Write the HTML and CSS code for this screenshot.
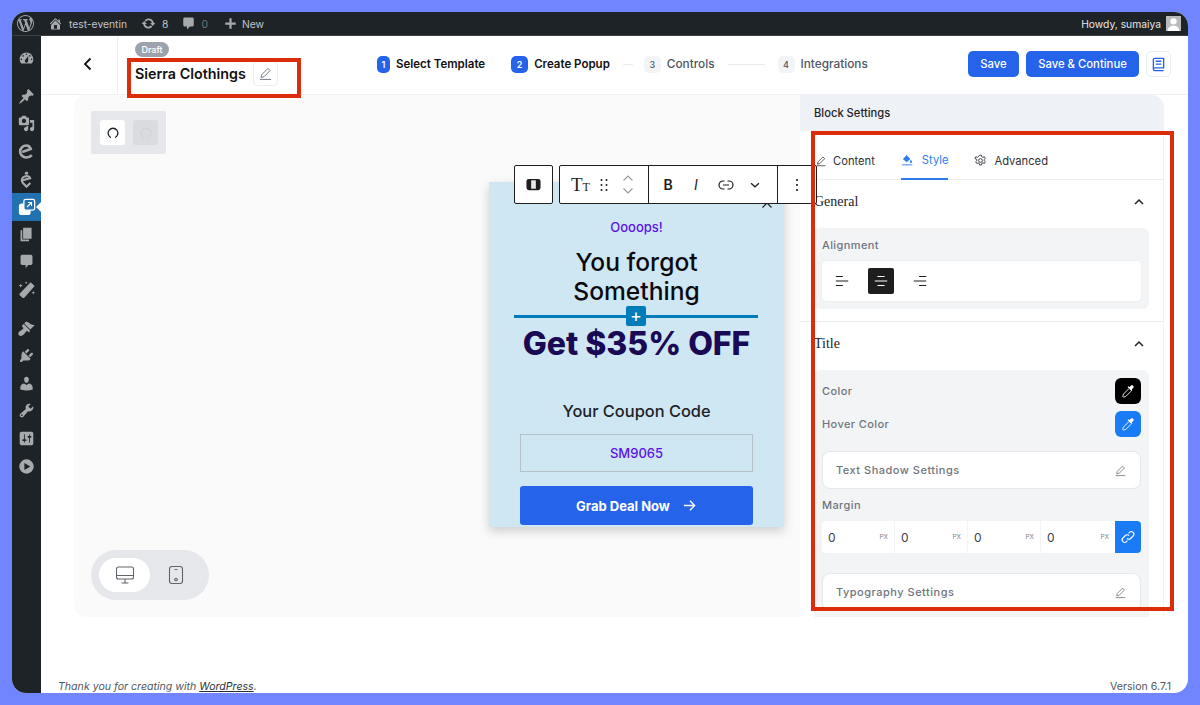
FILE: index.html
```html
<!DOCTYPE html>
<html lang="en">
<head>
    <meta charset="UTF-8">
    <title>Create Popup</title>
    <link rel="stylesheet" href="styles.css">
</head>
<body>

<svg class="sprite" width="0" height="0">
    <symbol id="pen" viewBox="0 0 16 16"><path d="M10.600 2.600l2.300 2.300-6.600 6.600-3 .7.7-3zM2 14.300h12" fill="none" stroke="currentColor" stroke-width="1"/></symbol>
    <symbol id="dropper" viewBox="0 0 16 16"><path d="M9.800 3.500l1.500-1.500c.7-.7 1.900-.7 2.600 0s.7 1.900 0 2.600l-1.500 1.500.5.9-1 1-4.400-4.400 1-1z" fill="currentColor"/><path d="M8.800 5.500l-6 6-.8 2.800.7.7 2.800-.8 6-6" fill="none" stroke="currentColor" stroke-width="1"/></symbol>
    <symbol id="chev-up" viewBox="0 0 12 12"><path d="M2 8l4-4 4 4" fill="none" stroke="currentColor" stroke-width="1.500"/></symbol>
</svg>

<div class="window">
    <div class="adminbar">
        <svg class="wp-logo" viewBox="0 0 20 20"><path fill="currentColor" d="M20 10c0-5.510-4.490-10-10-10C4.480 0 0 4.490 0 10c0 5.520 4.480 10 10 10 5.510 0 10-4.480 10-10zM7.780 15.370L4.370 6.220c.55-.02 1.170-.08 1.170-.08.5-.06.44-1.130-.06-1.110 0 0-1.450.11-2.370.11-.18 0-.37 0-.58-.01C4.120 2.690 6.870 1.110 10 1.110c2.330 0 4.450.87 6.050 2.340-.68-.11-1.650.39-1.650 1.580 0 .74.45 1.360.9 2.100.35.61.55 1.360.55 2.460 0 1.490-1.400 5-1.400 5l-3.030-8.370c.54-.02.82-.17.82-.17.5-.05.44-1.250-.06-1.220 0 0-1.440.12-2.380.12-.87 0-2.330-.12-2.330-.12-.5-.03-.56 1.200-.06 1.220l.92.08 1.260 3.410zM17.410 10c.24-.64.74-1.870.43-4.250.7 1.290 1.050 2.710 1.050 4.250 0 3.290-1.730 6.240-4.400 7.780.97-2.590 1.940-5.200 2.920-7.780zM6.100 18.090C3.120 16.650 1.110 13.530 1.110 10c0-1.300.23-2.480.72-3.590C3.250 10.300 4.670 14.200 6.100 18.090zm4.030-6.630l2.580 6.980c-.86.29-1.760.45-2.710.45-.79 0-1.570-.11-2.290-.33.81-2.380 1.620-4.740 2.420-7.100z"/></svg>
        <span class="bar-item site">
            <svg viewBox="0 0 20 20"><path fill="currentColor" d="M16 8.500l1.530 1.530-1.060 1.060L10 4.620l-6.470 6.470-1.060-1.060L10 2.500l4 4v-2h2v4zm-6-2.460l6 5.990V18H4v-5.970zM12 17v-5H8v5h4z"/></svg>
            test-eventin
        </span>
        <span class="bar-item updates">
            <svg viewBox="0 0 20 20"><path fill="currentColor" d="M10.200 3.280c3.530 0 6.430 2.610 6.920 6h2.080l-3.500 4-3.500-4h2.320c-.45-1.970-2.210-3.450-4.320-3.450-1.450 0-2.730.71-3.540 1.780L4.950 5.660C6.230 4.200 8.110 3.280 10.200 3.280zm-.4 13.440c-3.520 0-6.430-2.610-6.920-6H.8l3.500-4c1.170 1.330 2.330 2.670 3.500 4H5.480c.45 1.970 2.210 3.450 4.320 3.450 1.450 0 2.730-.71 3.540-1.780l1.710 1.950c-1.280 1.460-3.150 2.380-5.250 2.380z"/></svg>
            8
        </span>
        <span class="bar-item comments">
            <svg viewBox="0 0 20 20"><path fill="currentColor" d="M5 2h10c1.100 0 2 .9 2 2v8c0 1.100-.9 2-2 2h-3l-4 4v-4H5c-1.100 0-2-.9-2-2V4c0-1.100.9-2 2-2z"/></svg>
            <em>0</em>
        </span>
        <span class="bar-item new">
            <svg viewBox="0 0 20 20"><path fill="currentColor" d="M17 8.500v3h-5.500V17h-3v-5.500H3v-3h5.500V3h3v5.500z"/></svg>
            New
        </span>
        <span class="howdy">Howdy, sumaiya</span>
        <span class="avatar">
            <svg viewBox="0 0 14 14"><circle cx="7" cy="5" r="3" fill="#fff"/><path d="M1.500 14c0-3.500 2.500-5 5.500-5s5.500 1.500 5.500 5z" fill="#fff"/></svg>
        </span>
    </div>

    <div class="body">
        <nav class="sidebar">
            <a class="nav-item"><svg viewBox="0 0 20 20"><path fill-rule="evenodd" d="M3.760 16h12.480c1.100-1.370 1.760-3.110 1.760-5 0-4.420-3.580-8-8-8s-8 3.580-8 8c0 1.890.66 3.630 1.760 5zM10 4c.55 0 1 .45 1 1s-.45 1-1 1-1-.45-1-1 .45-1 1-1zM6 6c.55 0 1 .45 1 1s-.45 1-1 1-1-.45-1-1 .45-1 1-1zm8 0c.55 0 1 .45 1 1s-.45 1-1 1-1-.45-1-1 .45-1 1-1zm-5.370 5.550L12 7v6c0 1.100-.9 2-2 2s-2-.9-2-2c0-.57.24-1.080.63-1.450zM4 10c.55 0 1 .45 1 1s-.45 1-1 1-1-.45-1-1 .45-1 1-1zm12 0c.55 0 1 .45 1 1s-.45 1-1 1-1-.45-1-1 .45-1 1-1z"/></svg></a>
            <div class="nav-sep"></div>
            <a class="nav-item"><svg viewBox="0 0 20 20"><path d="M10.440 3.020l1.820-1.820 6.360 6.350-1.830 1.820c-1.050-.68-2.480-.57-3.410.36l-.75.75c-.92.93-1.040 2.350-.35 3.410l-1.830 1.820-2.410-2.410-2.800 2.790c-.42.42-3.380 2.710-3.800 2.290s1.860-3.390 2.280-3.810l2.790-2.790L4.100 9.360l1.830-1.820c1.050.69 2.480.57 3.400-.36l.75-.75c.93-.92 1.050-2.350.36-3.410z"/></svg></a>
            <a class="nav-item"><svg viewBox="0 0 20 20"><path d="M13 11V4c0-.55-.45-1-1-1h-1.670L9 1H5L3.670 3H2c-.55 0-1 .45-1 1v7c0 .55.45 1 1 1h10c.55 0 1-.45 1-1zM7 4.500c1.380 0 2.500 1.120 2.500 2.500S8.380 9.500 7 9.500 4.500 8.380 4.500 7 5.620 4.500 7 4.500zM14 6h5v10.500c0 1.380-1.120 2.500-2.500 2.500S14 17.880 14 16.500s1.120-2.500 2.500-2.500c.17 0 .34.02.5.05V9h-3V6zm-4 8.050V13h2v3.500c0 1.380-1.120 2.500-2.500 2.500S7 17.880 7 16.500 8.120 14 9.500 14c.17 0 .34.02.5.05z"/></svg></a>
            <a class="nav-item"><svg viewBox="0 0 20 20"><path fill="none" stroke="currentColor" stroke-width="3" d="M5 10.500l10-3.500c-.8-2.300-2.800-4-5.200-4C6 3 2.500 6 2.500 10c0 4 3.300 7 7.300 7 2.600 0 4.900-1 6.500-2.800"/></svg></a>
            <a class="nav-item"><svg viewBox="0 0 20 20"><circle cx="10" cy="2.500" r="2"/><path fill="none" stroke="currentColor" stroke-width="2.500" d="M5.500 11l8.800-2.500C13.800 7 12 6 10 6 7 6 4.500 8.200 4.500 11c0 1.300.5 2.300 1.300 3.200L10 18.500l4.500-4.500"/></svg></a>
            <a class="nav-item active">
                <svg viewBox="0 0 20 20"><rect x="1" y="6" width="13" height="13" rx="3" fill="#fff"/><rect x="6.500" y="1.500" width="12" height="12" rx="2" fill="#2271b1" stroke="#fff" stroke-width="1.500"/><path d="M10 10l5-5M11 5h4v4" fill="none" stroke="#fff" stroke-width="1.200"/></svg>
            </a>
            <a class="nav-item"><svg viewBox="0 0 20 20"><path d="M6 15V2h10v13H6zm-1 1h8v2H3V5h2v11z"/></svg></a>
            <a class="nav-item"><svg viewBox="0 0 20 20"><path d="M5 2h10c1.100 0 2 .9 2 2v8c0 1.100-.9 2-2 2h-3l-3 4v-4H5c-1.100 0-2-.9-2-2V4c0-1.100.9-2 2-2z"/></svg></a>
            <a class="nav-item"><svg class="wand" viewBox="0 0 20 20"><path d="M14 1.500l4.500 4L7 18.500c-.6.6-1.500.6-2 .1l-3-2.700c-.6-.5-.6-1.400 0-2zM3 3l.7 1.500L5.200 5l-1.500.7L3 7.200l-.7-1.500L.8 5l1.500-.5zM9 .5l.5 1 1 .5-1 .5-.5 1-.5-1-1-.5 1-.5zM17 11l.6 1.400 1.400.6-1.400.6L17 15l-.6-1.400-1.400-.6 1.400-.6z"/></svg></a>
            <div class="nav-sep wide"></div>
            <a class="nav-item"><svg viewBox="0 0 20 20"><path d="M14.480 11.060L7.410 3.990l1.500-1.500c.5-.56 2.300-.47 3.510.32 1.210.8 1.430 1.280 2.910 2.100 1.180.64 2.450 1.260 4.450.85zm-.71.71L6.700 4.700 4.930 6.470c-.39.39-.39 1.020 0 1.410l1.060 1.060c.39.39.39 1.030 0 1.420-.6.6-1.430 1.110-2.210 1.690-.35.26-.7.53-1.010.84C1.430 13.230.4 14.910.4 16.270c0 .52.07 1 .8 1.700.71.71 1.260.8 1.730.8 1.360 0 3.040-1.030 4.380-2.370.31-.31.58-.66.84-1.010.58-.78 1.090-1.610 1.690-2.210.39-.39 1.030-.39 1.420 0l1.060 1.060c.39.39 1.020.39 1.410 0z"/></svg></a>
            <a class="nav-item"><svg viewBox="0 0 20 20"><path d="M13.110 4.360L9.870 7.600 8 5.730l3.240-3.240c.35-.34 1.050-.2 1.560.32.52.51.66 1.210.31 1.550zm-8 1.770l.91-1.120 9.010 9.010-1.190.84c-.71.71-2.630 1.160-3.820 1.160H6.140L4.900 17.260c-.59.59-1.540.59-2.120 0-.59-.58-.59-1.530 0-2.120l1.240-1.240v-3.880c0-1.130.4-3.190 1.090-3.890zm7.260 3.970l3.240-3.240c.34-.35 1.040-.21 1.550.31.52.51.66 1.210.31 1.550l-3.240 3.250z"/></svg></a>
            <a class="nav-item"><svg viewBox="0 0 20 20"><path d="M10 9.250c-2.270 0-2.730-3.440-2.730-3.440C7 4.020 7.820 2 9.970 2c2.160 0 2.980 2.020 2.710 3.810 0 0-.41 3.440-2.680 3.440zm0 2.570L12.720 10c2.390 0 4.520 2.330 4.520 4.530v2.490s-3.650 1.130-7.240 1.130c-3.650 0-7.240-1.130-7.240-1.130v-2.490c0-2.250 1.940-4.480 4.470-4.480z"/></svg></a>
            <a class="nav-item"><svg viewBox="0 0 20 20"><path d="M16.680 9.770c-1.340 1.340-3.300 1.670-4.950.99l-5.410 6.520c-.99.99-2.590.99-3.580 0s-.99-2.590 0-3.570l6.520-5.420c-.68-1.650-.35-3.610.99-4.950 1.280-1.280 3.120-1.620 4.720-1.060l-2.890 2.890 2.820 2.820 2.860-2.870c.53 1.580.18 3.390-1.080 4.650zM3.810 16.210c.4.39 1.040.39 1.430 0 .4-.4.4-1.040 0-1.430-.39-.4-1.030-.4-1.430 0-.39.39-.39 1.030 0 1.430z"/></svg></a>
            <a class="nav-item"><svg viewBox="0 0 20 20"><path d="M18 16V4c0-1.100-.9-2-2-2H4c-1.100 0-2 .9-2 2v12c0 1.100.9 2 2 2h12c1.100 0 2-.9 2-2zM8 11h1c.55 0 1 .45 1 1s-.45 1-1 1H8v1.500c0 .28-.22.5-.5.5s-.5-.22-.5-.5V13H6c-.55 0-1-.45-1-1s.45-1 1-1h1V5.500c0-.28.22-.5.5-.5s.5.22.5.5V11zm5-2h-1c-.55 0-1-.45-1-1s.45-1 1-1h1V5.500c0-.28.22-.5.5-.5s.5.22.5.5V7h1c.55 0 1 .45 1 1s-.45 1-1 1h-1v5.500c0 .28-.22.5-.5.5s-.5-.22-.5-.5V9z"/></svg></a>
            <a class="nav-item"><svg viewBox="0 0 20 20"><path fill-rule="evenodd" d="M10 1.500a8.500 8.500 0 1 1 0 17 8.500 8.500 0 0 1 0-17zM7.500 6v8l7-4z"/></svg></a>
        </nav>

        <div class="main">
            <header class="header">
                <div class="back">
                    <svg viewBox="0 0 16 16"><path d="M10.500 2.500L5 8l5.500 5.500" fill="none" stroke="#111" stroke-width="1.800"/></svg>
                </div>
                <div class="title-block">
                    <span class="badge">Draft</span>
                    <div class="title-row">
                        <h1 class="page-title">Sierra Clothings</h1>
                        <span class="icon-btn"><svg><use href="#pen"/></svg></span>
                    </div>
                </div>
                <div class="steps">
                    <div class="step done first"><span class="num">1</span>Select Template</div>
                    <div class="step done"><span class="num">2</span>Create Popup</div>
                    <span class="step-line short"></span>
                    <div class="step"><span class="num">3</span>Controls</div>
                    <span class="step-line"></span>
                    <div class="step"><span class="num">4</span>Integrations</div>
                </div>
                <div class="actions">
                    <button class="btn save">Save</button>
                    <button class="btn save-next">Save &amp; Continue</button>
                    <span class="doc-btn">
                        <svg viewBox="0 0 16 16"><path d="M2.500 12.500V3c0-.9.6-1.500 1.500-1.500h9.500v10H4c-.9 0-1.500.6-1.500 1.500s.6 1.500 1.500 1.500h9.500" fill="none" stroke="#2563eb" stroke-width="1.400"/><path d="M5 4.500h6M5 7.500h6" stroke="#2563eb" stroke-width="1.400"/></svg>
                    </span>
                </div>
            </header>

            <div class="workspace">
                <div class="canvas">
                    <div class="preview-tools">
                        <span class="tool on"><svg viewBox="0 0 16 16"><path d="M5.500 13.200A5.600 5.600 0 1 1 10.500 13.200" fill="none" stroke="#1d2327" stroke-width="1.500"/></svg></span>
                        <span class="tool off"><svg viewBox="0 0 16 16"><path d="M5.500 13.200A5.600 5.600 0 1 1 10.500 13.200" fill="none" stroke="#d0d3d7" stroke-width="1.500"/></svg></span>
                    </div>

                    <div class="devices">
                        <span class="device on">
                            <svg viewBox="0 0 20 20"><rect x="1.500" y="2" width="17" height="12" rx="2" fill="none" stroke="currentColor" stroke-width="1.100"/><path d="M1.500 10.500h17M10 14v4M6.500 18h7" fill="none" stroke="currentColor" stroke-width="1.100"/></svg>
                        </span>
                        <span class="device">
                            <svg viewBox="0 0 20 20"><rect x="3.500" y="1.500" width="13" height="17" rx="2.500" fill="none" stroke="currentColor" stroke-width="1.100"/><path d="M8.500 4.500h3" stroke="currentColor" stroke-width="1.100"/><circle cx="10" cy="14.500" r="1.300" fill="none" stroke="currentColor" stroke-width="1.100"/></svg>
                        </span>
                    </div>

                    <div class="popup">
                        <svg class="popup-close" viewBox="0 0 12 12"><path d="M1.500 1.500l9 9M10.500 1.500l-9 9" stroke="#222" stroke-width="1.200"/></svg>
                        <p class="oops">Oooops!</p>
                        <h2 class="forgot">You forgot Something</h2>
                        <div class="inserter"><span class="plus">+</span></div>
                        <h2 class="deal">Get $35% OFF</h2>
                        <p class="coupon-label">Your Coupon Code</p>
                        <div class="coupon">SM9065</div>
                        <div class="grab">
                            Grab Deal Now
                            <svg viewBox="0 0 16 16"><path d="M2 8h11.500M8.500 3l5 5-5 5" fill="none" stroke="#fff" stroke-width="1.400"/></svg>
                        </div>
                    </div>

                    <div class="block-toolbar">
                        <div class="tb-group tb-single">
                            <svg viewBox="0 0 16 16"><rect x=".5" y="2" width="15" height="12" rx="2.500" fill="#1e1e1e"/><rect x="5.500" y="3.500" width="5" height="9" fill="#e8e8e8"/></svg>
                        </div>
                        <div class="tb-group tb-main">
                            <div class="tb-seg seg-a">
                                <span class="tt">T<small>T</small></span>
                                <svg class="grip" viewBox="0 0 10 14"><g fill="#1e1e1e"><circle cx="2.500" cy="2" r="1"/><circle cx="7.500" cy="2" r="1"/><circle cx="2.500" cy="7" r="1"/><circle cx="7.500" cy="7" r="1"/><circle cx="2.500" cy="12" r="1"/><circle cx="7.500" cy="12" r="1"/></g></svg>
                                <span class="movers">
                                    <svg viewBox="0 0 12 8"><path d="M1.500 6.500L6 2l4.500 4.500" fill="none" stroke="#999" stroke-width="1.100"/></svg>
                                    <svg viewBox="0 0 12 8"><path d="M1.500 1.500L6 6l4.500-4.500" fill="none" stroke="#999" stroke-width="1.100"/></svg>
                                </span>
                            </div>
                            <div class="tb-seg seg-b">
                                <b>B</b>
                                <i>I</i>
                                <svg viewBox="0 0 16 16"><path d="M6.500 4H5a4 4 0 0 0 0 8h1.500M9.500 4H11a4 4 0 0 1 0 8H9.500M5 8h6" fill="none" stroke="#1e1e1e" stroke-width="1.200"/></svg>
                                <svg viewBox="0 0 16 16"><path d="M3.500 6L8 10l4.500-4" fill="none" stroke="#1e1e1e" stroke-width="1.500"/></svg>
                            </div>
                            <div class="tb-seg seg-c">
                                <svg viewBox="0 0 4 16"><g fill="#1e1e1e"><circle cx="2" cy="3" r="1.100"/><circle cx="2" cy="8" r="1.100"/><circle cx="2" cy="13" r="1.100"/></g></svg>
                            </div>
                        </div>
                    </div>
                </div>

                <aside class="panel">
                    <div class="panel-head">Block Settings</div>
                    <div class="tabs">
                        <span class="tab tab-content"><svg><use href="#pen"/></svg>Content</span>
                        <span class="tab current">
                            <svg viewBox="0 0 16 16"><path d="M7 1l5.500 5.500-5 4.500-5-4.500 4-4" fill="currentColor"/><path d="M13.200 8.500c.6 1 1 1.500 1 2.200a1 1 0 0 1-2 0c0-.7.4-1.200 1-2.200zM1 14.500h14" fill="currentColor" stroke="currentColor" stroke-width="1.200"/></svg>
                            Style
                        </span>
                        <span class="tab tab-advanced">
                            <svg viewBox="0 0 16 16"><circle cx="8" cy="8" r="2.300" fill="none" stroke="currentColor" stroke-width="1.100"/><path d="M6.800 1.500h2.400l.4 1.900 1.300.7 1.800-.7 1.200 2.100-1.400 1.300v1.400l1.400 1.300-1.200 2.100-1.800-.7-1.300.7-.4 1.900H6.800l-.4-1.900-1.300-.7-1.800.7-1.200-2.100 1.400-1.300V6.800L1.100 5.500l1.200-2.100 1.800.7 1.300-.7z" fill="none" stroke="currentColor" stroke-width="1.100"/></svg>
                            Advanced
                        </span>
                    </div>

                    <section class="section ruled">
                        <div class="section-head">General <svg><use href="#chev-up"/></svg></div>
                        <div class="group">
                            <label class="field-label first">Alignment</label>
                            <div class="align-card">
                                <span class="align"><svg viewBox="0 0 18 18"><path d="M2 4h8M2 9h14M2 14h8" stroke="currentColor" stroke-width="1.200"/></svg></span>
                                <span class="align on"><svg viewBox="0 0 18 18"><path d="M5 4h8M2 9h14M5 14h8" stroke="currentColor" stroke-width="1.200"/></svg></span>
                                <span class="align"><svg viewBox="0 0 18 18"><path d="M8 4h8M2 9h14M8 14h8" stroke="currentColor" stroke-width="1.200"/></svg></span>
                            </div>
                        </div>
                    </section>

                    <section class="section">
                        <div class="section-head">Title <svg><use href="#chev-up"/></svg></div>
                        <div class="group tall">
                            <div class="color-row">
                                <label class="field-label">Color</label>
                                <span class="swatch black"><svg><use href="#dropper"/></svg></span>
                            </div>
                            <div class="color-row">
                                <label class="field-label">Hover Color</label>
                                <span class="swatch blue"><svg><use href="#dropper"/></svg></span>
                            </div>
                            <div class="setting-card shadow-card">Text Shadow Settings <svg><use href="#pen"/></svg></div>
                            <label class="field-label margin-label">Margin</label>
                            <div class="margins">
                                <span class="margin-box">0<small>PX</small></span>
                                <span class="margin-box">0<small>PX</small></span>
                                <span class="margin-box">0<small>PX</small></span>
                                <span class="margin-box">0<small>PX</small></span>
                                <span class="link-btn">
                                    <svg viewBox="0 0 16 16"><path d="M7 9.500a2.500 2.500 0 0 0 3.600 0l2.500-2.500A2.500 2.500 0 0 0 9.500 3.400L8.600 4.300M9 6.500a2.500 2.500 0 0 0-3.600 0L2.900 9a2.500 2.500 0 0 0 3.600 3.600l.9-.9" fill="none" stroke="#fff" stroke-width="1.100"/></svg>
                                </span>
                            </div>
                            <div class="setting-card typo-card">Typography Settings <svg><use href="#pen"/></svg></div>
                        </div>
                    </section>
                </aside>
            </div>

            <footer class="footer">
                <span class="thanks">Thank you for creating with <a>WordPress</a>.</span>
                <span class="version">Version 6.7.1</span>
            </footer>
        </div>
    </div>

    <div class="callout callout-title"></div>
    <div class="callout callout-panel"></div>
</div>

</body>
</html>
```

FILE: styles.css
```css
* {
    box-sizing: border-box;
}
html, body {
    height: 100%;
    margin: 0;
    padding: 0;
    overflow: hidden;
    background-color: #7085ff;
    font-family: Inter, "Liberation Sans", sans-serif;
}
h1, h2, p {
    margin: 0;
}
.sprite {
    position: absolute;
}
.window {
    position: relative;
    display: flex;
    flex-direction: column;
    width: 1176px;
    height: 681px;
    margin: 12px;
    border-radius: 14px;
    overflow: hidden;
    background-color: #fff;
}

/* admin bar */
.adminbar {
    display: flex;
    align-items: center;
    flex: none;
    height: 24px;
    padding: 0 7px 0 5px;
    background-color: #1d2327;
    border-bottom: 1px solid #3a3f44;
    color: #c3c4c7;
    font-size: 10.300px;
}
.wp-logo {
    width: 17px;
    height: 17px;
    margin-right: 14px;
    color: #9ca2a7;
}
.bar-item {
    display: flex;
    align-items: center;
    gap: 6px;
}
.bar-item svg {
    width: 15px;
    height: 15px;
    color: #a7aaad;
}
.site {
    margin-right: 14px;
}
.updates {
    margin-right: 13px;
}
.comments {
    margin-right: 15px;
}
.comments em {
    font-style: normal;
    color: #70757a;
    margin-left: -1px;
}
.new {
    gap: 4px;
}
.howdy {
    margin-left: auto;
    color: #e6e7e8;
}
.avatar {
    display: block;
    width: 15px;
    height: 15px;
    margin-left: 5px;
    background-color: #b8babc;
}
.avatar svg {
    display: block;
    width: 15px;
    height: 15px;
}

.body {
    display: flex;
    flex: 1;
    min-height: 0;
}

/* left menu */
.sidebar {
    flex: none;
    width: 29px;
    padding-top: 9px;
    background-color: #1d2327;
}
.nav-item {
    display: flex;
    align-items: center;
    justify-content: center;
    height: 27.600px;
    color: #a7aaad;
}
.nav-item svg {
    width: 17px;
    height: 17px;
    fill: currentColor;
}
.nav-item .wand {
    width: 18px;
    height: 18px;
}
.nav-item.active {
    position: relative;
    background-color: #2271b1;
}
.nav-item.active svg {
    width: 18px;
    height: 18px;
}
.nav-item.active::after {
    content: "";
    position: absolute;
    right: 0;
    top: 9px;
    border: 5px solid transparent;
    border-right-color: #fff;
    border-left-width: 0;
}
.nav-sep {
    height: 10px;
}
.nav-sep.wide {
    height: 11px;
}

.main {
    display: flex;
    flex-direction: column;
    flex: 1;
    min-width: 0;
}

/* top header with the steps */
.header {
    display: flex;
    align-items: center;
    flex: none;
    height: 59px;
    padding-right: 17px;
    border-bottom: 1px solid #eef0f3;
}
.back {
    display: flex;
    align-items: center;
    justify-content: center;
    flex: none;
    align-self: stretch;
    width: 77px;
    padding-left: 17px;
    padding-bottom: 2px;
    border-right: 1px solid #eceef1;
}
.back svg {
    width: 16px;
    height: 16px;
}
.title-block {
    flex: none;
    width: 259px;
    padding-left: 17px;
    padding-bottom: 3px;
}
.badge {
    display: block;
    width: 34px;
    height: 15px;
    border-radius: 8px;
    background-color: #9ca3af;
    color: #fff;
    font-size: 9px;
    font-weight: 500;
    line-height: 15px;
    text-align: center;
}
.title-row {
    display: flex;
    align-items: center;
    gap: 7px;
    margin-top: 4px;
}
.page-title {
    color: #111;
    font-size: 14.300px;
    font-weight: 600;
    line-height: 25px;
}
.icon-btn {
    display: flex;
    align-items: center;
    justify-content: center;
    width: 25px;
    height: 25px;
    border: 1px solid #eceef1;
    border-radius: 4px;
    color: #6b7280;
}
.icon-btn svg {
    width: 15px;
    height: 15px;
}
.steps {
    display: flex;
    align-items: center;
    padding-bottom: 2px;
    font-size: 11.500px;
    font-weight: 500;
    color: #50565f;
}
.step {
    display: flex;
    align-items: center;
    gap: 6px;
    white-space: nowrap;
    font-size: 11.800px;
}
.step.done {
    color: #111;
    font-weight: 600;
    font-size: 11.500px;
    margin-right: 13px;
}
.step.first {
    margin-right: 26px;
}
.num {
    display: flex;
    align-items: center;
    justify-content: center;
    width: 17px;
    height: 17px;
    border-radius: 5px;
    background-color: #f3f4f6;
    color: #50565f;
    font-size: 9px;
}
.done .num {
    background-color: #2563eb;
    color: #fff;
}
.first .num {
    width: 13px;
}
.step-line {
    width: 37px;
    height: 1px;
    margin: 0 13px;
    background-color: #e9ebee;
}
.step-line.short {
    width: 10px;
    margin-left: 0;
    margin-right: 11px;
}
.actions {
    display: flex;
    align-items: center;
    gap: 7px;
    margin-left: auto;
    padding-bottom: 2px;
}
.btn {
    height: 26px;
    padding: 0;
    border: 0;
    border-radius: 5px;
    background-color: #2563eb;
    color: #fff;
    font-family: inherit;
    font-size: 11.300px;
    font-weight: 500;
}
.save {
    width: 51px;
}
.save-next {
    width: 113px;
}
.doc-btn {
    display: flex;
    align-items: center;
    justify-content: center;
    width: 25px;
    height: 26px;
    border: 1px solid #eceef1;
    border-radius: 5px;
}
.doc-btn svg {
    width: 15px;
    height: 15px;
}

/* canvas and settings */
.workspace {
    display: flex;
    flex: none;
    height: 522px;
    margin-left: 33px;
}
.canvas {
    position: relative;
    display: flex;
    flex-direction: column;
    justify-content: space-between;
    align-items: flex-start;
    flex: none;
    width: 726px;
    padding: 16px 17px 17px;
    border-radius: 12px 0 0 12px;
    background-color: #fafafa;
}
.preview-tools {
    display: flex;
    align-items: center;
    gap: 8px;
    width: 75px;
    height: 43px;
    padding-left: 9px;
    background-color: #e5e7eb;
    border-radius: 2px;
}
.tool {
    display: flex;
    align-items: center;
    justify-content: center;
    width: 25px;
    height: 25px;
    border-radius: 3px;
}
.tool svg {
    width: 14px;
    height: 14px;
}
.tool.on {
    background-color: #fff;
}
.tool.off {
    background-color: #d9dbdf;
}
.devices {
    display: flex;
    align-items: center;
    width: 118px;
    height: 50px;
    padding-left: 8px;
    border-radius: 25px;
    background-color: #e5e7eb;
    color: #60656c;
}
.device {
    display: flex;
    align-items: center;
    justify-content: center;
    width: 51px;
    height: 34px;
    border-radius: 17px;
}
.device.on {
    background-color: #fff;
}
.device svg {
    width: 20px;
    height: 20px;
}

/* popup being edited */
.popup {
    position: absolute;
    left: 415px;
    top: 87px;
    display: flex;
    flex-direction: column;
    align-items: center;
    width: 295px;
    height: 345px;
    padding-top: 36px;
    background-color: #cfe6f3;
    box-shadow: 0 4px 10px rgba(0, 0, 0, 0.18);
}
.popup-close {
    position: absolute;
    top: 15px;
    right: 11px;
    width: 12px;
    height: 12px;
}
.oops {
    color: #5a12e8;
    font-size: 13px;
    font-weight: 500;
    line-height: 18px;
}
.forgot {
    width: 200px;
    margin-top: 12px;
    color: #0b0b0f;
    font-size: 24.600px;
    font-weight: 500;
    line-height: 29px;
    text-align: center;
}
.inserter {
    display: flex;
    align-items: center;
    justify-content: center;
    flex: none;
    width: 244px;
    height: 20px;
    margin-left: -1px;
    margin-bottom: -2px;
    background: linear-gradient(#007cba, #007cba) center / 100% 3px no-repeat;
}
.plus {
    display: block;
    width: 20px;
    height: 20px;
    border-radius: 2px;
    background-color: #007cba;
    color: #fff;
    font-size: 18px;
    font-weight: 400;
    line-height: 19px;
    text-align: center;
}
.deal {
    color: #1a0a55;
    font-size: 32px;
    font-weight: 800;
    line-height: 40px;
    white-space: nowrap;
}
.coupon-label {
    margin-top: 35px;
    color: #1d2327;
    font-size: 16.400px;
    font-weight: 500;
    line-height: 24px;
}
.coupon {
    width: 233px;
    height: 38px;
    margin-top: 11px;
    border: 1px solid #b4c3ca;
    color: #5a12e8;
    font-size: 13px;
    font-weight: 500;
    line-height: 36px;
    text-align: center;
}
.grab {
    display: flex;
    align-items: center;
    justify-content: center;
    gap: 12px;
    width: 233px;
    height: 39px;
    margin-top: 14px;
    border-radius: 3px;
    background-color: #2563eb;
    color: #fff;
    font-size: 13px;
    font-weight: 700;
}
.grab svg {
    width: 15px;
    height: 15px;
}

/* block toolbar floats over popup and panel */
.block-toolbar {
    position: absolute;
    left: 440px;
    top: 70px;
    z-index: 3;
    display: flex;
    gap: 6px;
    height: 39px;
}
.tb-group {
    display: flex;
    height: 39px;
    background-color: #fff;
    border: 1px solid #1e1e1e;
    border-radius: 2px;
}
.tb-single {
    align-items: center;
    justify-content: center;
    width: 39px;
}
.tb-single svg {
    width: 15px;
    height: 15px;
}
.tb-main {
    width: 258px;
}
.tb-seg {
    display: flex;
    align-items: center;
    height: 100%;
    color: #1e1e1e;
}
.seg-a {
    width: 89px;
    padding-left: 11px;
    border-right: 1px solid #1e1e1e;
}
.tt {
    width: 18px;
    font-family: "Liberation Serif", serif;
    font-size: 19px;
    line-height: 1;
}
.tt small {
    font-size: 12px;
}
.grip {
    width: 10px;
    height: 14px;
    margin-left: 10px;
}
.movers {
    display: flex;
    flex-direction: column;
    gap: 5px;
    margin-left: 13px;
}
.movers svg {
    display: block;
    width: 12px;
    height: 8px;
}
.seg-b {
    gap: 18px;
    width: 129px;
    padding-left: 13px;
    border-right: 1px solid #1e1e1e;
}
.seg-b b {
    width: 12px;
    font-size: 14px;
    font-weight: 600;
    text-align: center;
}
.seg-b i {
    width: 8px;
    font-size: 14px;
    text-align: center;
}
.seg-b svg {
    width: 16px;
    height: 16px;
}
.seg-b svg:last-child {
    width: 14px;
    height: 14px;
    margin-left: -4px;
}
.seg-c {
    justify-content: flex-start;
    padding-left: 17px;
}
.seg-c svg {
    width: 4px;
    height: 16px;
}

/* settings panel */
.panel {
    flex: none;
    width: 364px;
    height: 522px;
    overflow: hidden;
    border-right: 1px solid #f1f2f4;
    border-radius: 0 12px 0 0;
    background-color: #fff;
}
.panel-head {
    height: 36px;
    padding-left: 14px;
    background-color: #eef1f6;
    color: #1d2327;
    font-size: 11.200px;
    font-weight: 500;
    line-height: 36px;
}
.tabs {
    display: flex;
    gap: 26px;
    height: 49px;
    padding-left: 15px;
    border-bottom: 1px solid #edeff2;
}
.tab {
    display: flex;
    align-items: center;
    gap: 9px;
    height: 49px;
    padding-top: 10px;
    color: #2c3138;
    font-size: 11.200px;
}
.tab svg {
    width: 12px;
    height: 12px;
}
.tab-content {
    gap: 6px;
}
.tab-advanced {
    gap: 7px;
}
.tab-advanced svg {
    width: 13px;
    height: 13px;
}
.tab.current {
    border-bottom: 2px solid #2b7de9;
    color: #2b7de9;
}
.section.ruled {
    padding-bottom: 12px;
    border-bottom: 1px solid #e9ebee;
}
.section-head {
    display: flex;
    align-items: center;
    justify-content: space-between;
    height: 48px;
    padding: 0 18px 5px 14px;
    color: #1d2327;
    font-family: "Liberation Serif", serif;
    font-size: 14px;
}
.section-head svg {
    width: 12px;
    height: 12px;
}
.group {
    margin: 0 14px;
    padding: 9px 8px 8px;
    border-radius: 6px;
    background-color: #f2f4f6;
}
.group.tall {
    height: 260px;
    padding-top: 8px;
    border-radius: 6px 6px 0 0;
}
.field-label {
    display: block;
    color: #70757e;
    font-size: 11px;
    font-weight: 500;
    letter-spacing: 0.4px;
    line-height: 16px;
}
.field-label.first {
    margin-bottom: 8px;
}
.align-card {
    display: flex;
    align-items: center;
    gap: 13px;
    height: 40px;
    padding-left: 7px;
    border-radius: 4px;
    background-color: #fff;
    box-shadow: 0 0 2px rgba(0, 0, 0, 0.08);
}
.align {
    display: flex;
    align-items: center;
    justify-content: center;
    width: 26px;
    height: 26px;
    border-radius: 2px;
    color: #1e1e1e;
}
.align.on {
    background-color: #1e1e1e;
    color: #fff;
}
.align svg {
    width: 16px;
    height: 16px;
}
.color-row {
    display: flex;
    align-items: center;
    justify-content: space-between;
    height: 26px;
    margin-bottom: 7px;
}
.swatch {
    display: flex;
    align-items: center;
    justify-content: center;
    width: 26px;
    height: 26px;
    border-radius: 6px;
    color: #fff;
}
.swatch svg {
    width: 14px;
    height: 14px;
}
.swatch.black {
    background-color: #000;
}
.swatch.blue {
    background-color: #1a7cf5;
}
.setting-card {
    display: flex;
    align-items: center;
    justify-content: space-between;
    height: 38px;
    padding: 0 13px;
    border: 1px solid #e5e7eb;
    border-radius: 8px;
    background-color: #fff;
    color: #70757e;
    font-size: 11px;
    font-weight: 500;
    letter-spacing: 0.5px;
}
.setting-card svg {
    width: 13px;
    height: 13px;
}
.shadow-card {
    margin-top: 14px;
}
.margin-label {
    margin: 8px 0;
}
.margins {
    display: flex;
    height: 32px;
}
.margin-box {
    display: flex;
    align-items: center;
    justify-content: space-between;
    flex: none;
    width: 72px;
    margin-right: 1px;
    padding: 0 6px;
    background-color: #fff;
    color: #3c4148;
    font-size: 12px;
}
.margin-box small {
    color: #80858c;
    font-size: 6.500px;
}
.margin-box:first-child {
    border-radius: 4px 0 0 4px;
}
.margin-box:nth-child(4) {
    width: 74px;
    margin-right: 0;
}
.link-btn {
    display: flex;
    align-items: center;
    justify-content: center;
    flex: none;
    width: 26px;
    border-radius: 0 4px 4px 0;
    background-color: #1a7cf5;
}
.link-btn svg {
    width: 16px;
    height: 16px;
}
.typo-card {
    margin-top: 20px;
}

.footer {
    display: flex;
    align-items: flex-end;
    justify-content: space-between;
    flex: 1;
    padding: 0 17px;
    color: #50575e;
    font-size: 10.600px;
    line-height: 12px;
}
.thanks {
    font-style: italic;
}
.thanks a {
    color: #2c3338;
    text-decoration: underline;
}

/* red annotation boxes on the screenshot */
.callout {
    position: absolute;
    z-index: 5;
    border: 4px solid #dc2c0a;
}
.callout-title {
    left: 115px;
    top: 46px;
    width: 174px;
    height: 40px;
}
.callout-panel {
    left: 799px;
    top: 119px;
    width: 363px;
    height: 480px;
}
```
